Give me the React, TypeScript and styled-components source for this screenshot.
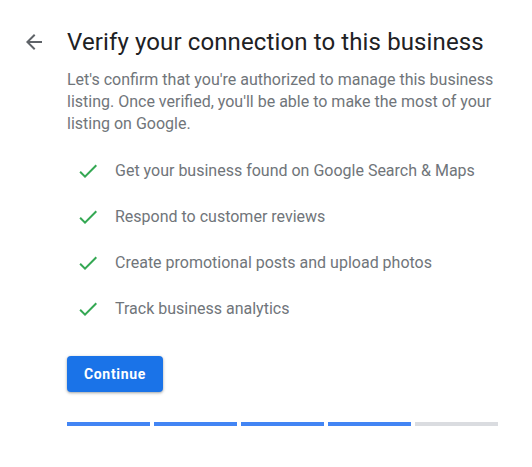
import React from "react";
import styled, { createGlobalStyle } from "styled-components";

const GlobalStyle = createGlobalStyle`
  body {
    margin: 0;
    background: #fff;
    font-family: Roboto, "Liberation Sans", Arial, sans-serif;
  }
`;

const Page = styled.main`
  width: 532px;
  padding: 26px 0 0 0;
  box-sizing: border-box;
`;

const Header = styled.header`
  display: flex;
  align-items: center;
  height: 32px;
`;

const BackButton = styled.button`
  width: 67px;
  height: 32px;
  padding: 0 0 0 22px;
  border: 0;
  background: none;
  display: flex;
  align-items: center;
  color: #5f6368;
  cursor: pointer;
`;

const Title = styled.h1`
  margin: 0;
  font-family: Roboto, "Liberation Sans", sans-serif;
  font-weight: 400;
  font-size: 24px;
  line-height: 32px;
  letter-spacing: 0.12px;
  color: #202124;
`;

const Body = styled.section`
  padding-left: 67px;
  padding-right: 30px;
`;

const Intro = styled.p`
  margin: 11px 0 0;
  font-size: 16px;
  line-height: 22px;
  color: #70757a;
`;

const Perks = styled.ul`
  list-style: none;
  margin: 12.5px 0 0;
  padding: 0;
`;

const Perk = styled.li`
  display: flex;
  align-items: center;
  height: 46px;
  padding-left: 9px;
  gap: 15px;
  font-size: 16px;
  color: #70757a;
`;

const Continue = styled.button`
  margin-top: 24px;
  width: 96px;
  height: 36px;
  border: 0;
  border-radius: 4px;
  background: #1a73e8;
  color: #fff;
  font-family: Roboto, "Liberation Sans", sans-serif;
  font-weight: 700;
  font-size: 14px;
  letter-spacing: 0.7px;
  box-shadow: 0 1px 2px rgba(60, 64, 67, 0.3), 0 1px 3px 1px rgba(60, 64, 67, 0.15);
  cursor: pointer;
`;

const Steps = styled.div`
  display: flex;
  gap: 4px;
  margin-top: 30px;
`;

const Step = styled.div<{ $done: boolean }>`
  width: 83px;
  height: 4px;
  background: ${(p) => (p.$done ? "#4285f4" : "#dadce0")};
`;

const ArrowBack = () => (
  <svg width="24" height="24" viewBox="0 0 24 24" fill="currentColor">
    <path d="M20 11H7.83l5.59-5.59L12 4l-8 8 8 8 1.41-1.41L7.83 13H20v-2z" />
  </svg>
);

const Check = () => (
  <svg width="24" height="24" viewBox="0 0 24 24" fill="#34a853">
    <path d="M9 16.17L4.83 12l-1.42 1.41L9 19 21 7l-1.41-1.41z" />
  </svg>
);

const perks = [
  "Get your business found on Google Search & Maps",
  "Respond to customer reviews",
  "Create promotional posts and upload photos",
  "Track business analytics",
];

export default function App() {
  return (
    <>
      <GlobalStyle />
      <Page>
        <Header>
          <BackButton aria-label="Back">
            <ArrowBack />
          </BackButton>
          <Title>Verify your connection to this business</Title>
        </Header>
        <Body>
          <Intro>
            Let's confirm that you're authorized to manage this business
            listing. Once verified, you'll be able to make the most of your
            listing on Google.
          </Intro>
          <Perks>
            {perks.map((p) => (
              <Perk key={p}>
                <Check />
                {p}
              </Perk>
            ))}
          </Perks>
          <Continue>Continue</Continue>
          <Steps>
            {[0, 1, 2, 3, 4].map((i) => (
              <Step key={i} $done={i < 4} />
            ))}
          </Steps>
        </Body>
      </Page>
    </>
  );
}
